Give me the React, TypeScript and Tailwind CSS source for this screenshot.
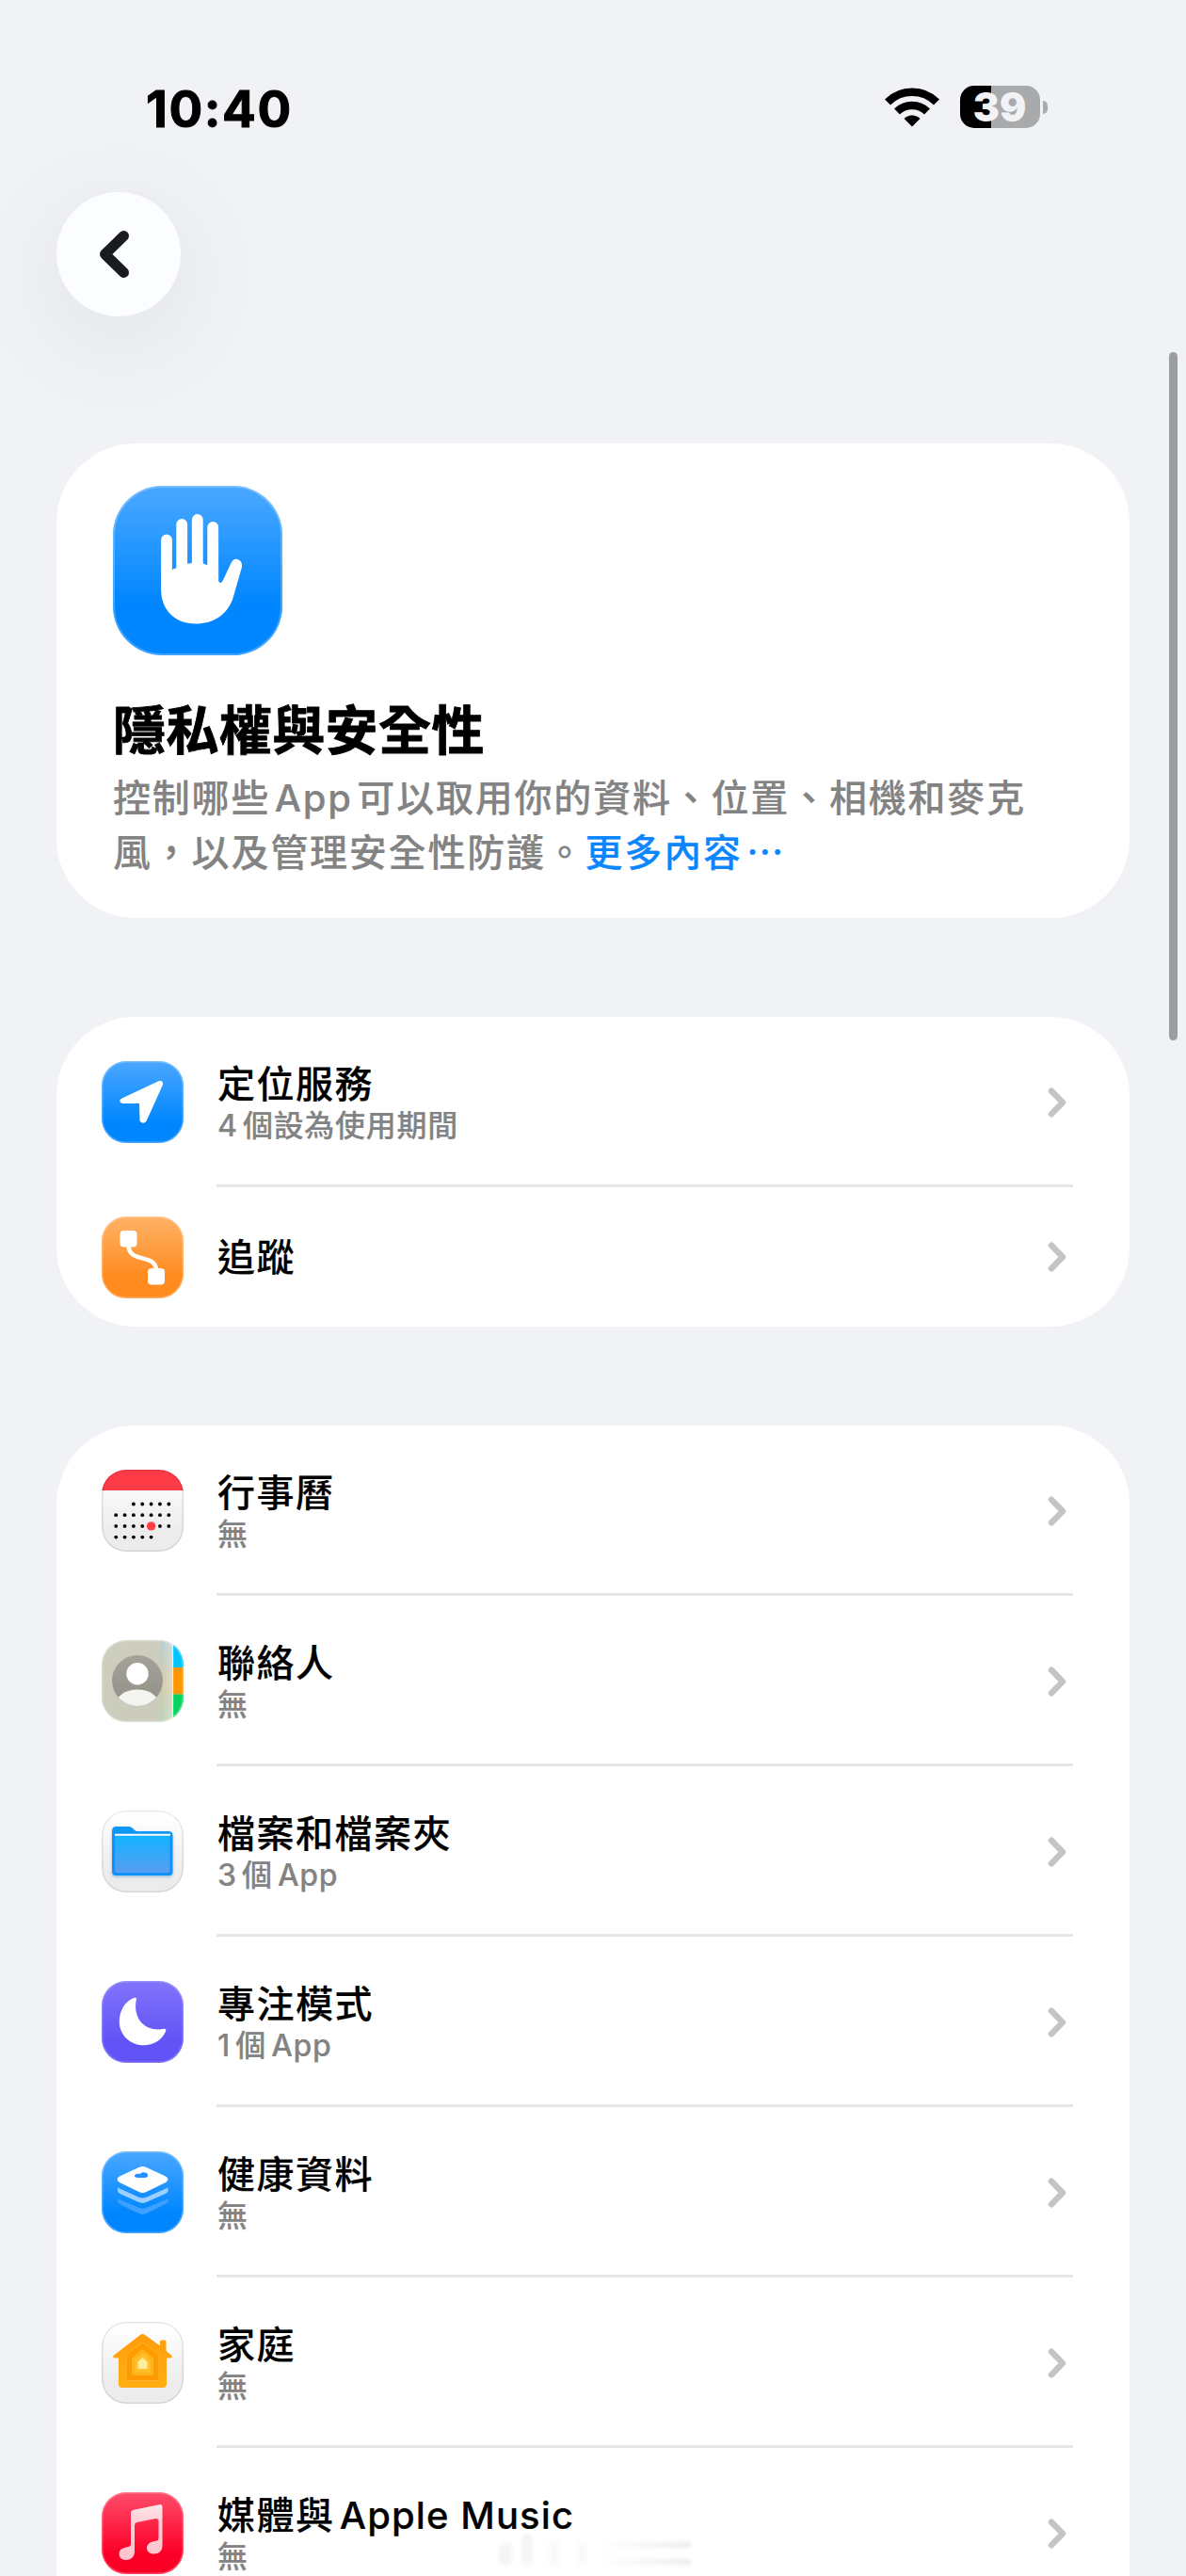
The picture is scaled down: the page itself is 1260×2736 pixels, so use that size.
import React from "react";

const R = 26;

function Squircle({ id, children, stops, rim }: { id: string; children?: React.ReactNode; stops: [string, string]; rim: string }) {
  return (
    <svg width="87" height="87" viewBox="0 0 87 87" className="block">
      <defs>
        <linearGradient id={id + "-bg"} x1="0" y1="0" x2="0" y2="1">
          <stop offset="0.05" stopColor={stops[0]} />
          <stop offset="0.75" stopColor={stops[1]} />
        </linearGradient>
        <clipPath id={id + "-clip"}>
          <rect width="87" height="87" rx={R} />
        </clipPath>
      </defs>
      <g clipPath={`url(#${id}-clip)`}>
        <rect width="87" height="87" fill={`url(#${id}-bg)`} />
        {children}
        <rect x="0.75" y="0.75" width="85.5" height="85.5" rx={R - 0.75} fill="none" stroke={rim} strokeWidth="1.5" />
      </g>
    </svg>
  );
}

const BLUE: [string, string] = ["#46a5ff", "#0086ff"];
const PAPER: [string, string] = ["#ffffff", "#ececec"];

function LocationIcon() {
  return (
    <Squircle id="loc" stops={BLUE} rim="rgba(255,255,255,0.28)">
      <path d="M21 39.800 60.500 21.300Q65.500 19.800 65 25L47.700 63.500Q44 68 40.500 63.500L40 45 22 45Q17 43 21 39.800Z" fill="#fff" />
    </Squircle>
  );
}

function TrackingIcon() {
  return (
    <Squircle id="trk" stops={["#ffb062", "#ff8a1e"]} rim="rgba(255,255,255,0.28)">
      <rect x="19.500" y="15" width="18" height="17.500" rx="4" fill="#fff" />
      <rect x="49" y="55" width="18" height="17.500" rx="4" fill="#fff" />
      <path d="M28.500 31C29 39 33 41.500 41 43.800S57 47 58 56" fill="none" stroke="#fff" strokeWidth="4.500" />
    </Squircle>
  );
}

function CalendarIcon() {
  const rows: number[][] = [[2, 3, 4, 5, 6], [0, 1, 2, 3, 4, 5, 6], [0, 1, 2, 3, 5, 6], [0, 1, 2, 3, 4]];
  return (
    <Squircle id="cal" stops={PAPER} rim="rgba(0,0,0,0.1)">
      <rect width="87" height="22" fill="#ff3b47" />
      {rows.map((cols, r) =>
        cols.map((c) => <circle key={`${r}-${c}`} cx={15.2 + c * 9.35} cy={36.5 + r * 11.7} r="1.900" fill="#000" />)
      )}
      <circle cx="52.600" cy="59.900" r="4.700" fill="#ff4049" />
    </Squircle>
  );
}

function ContactsIcon() {
  return (
    <Squircle id="con" stops={["#cdcebe", "#cbccbc"]} rim="rgba(255,255,255,0.3)">
      <defs>
        <linearGradient id="con-glow" x1="0" x2="1">
          <stop offset="0" stopColor="#fff" stopOpacity="0" />
          <stop offset="1" stopColor="#fff" stopOpacity="0.35" />
        </linearGradient>
        <linearGradient id="con-tint" x1="0" y1="0" x2="0" y2="1">
          <stop offset="0.1" stopColor="#7cc4de" />
          <stop offset="0.5" stopColor="#e8b06a" />
          <stop offset="0.9" stopColor="#90d49a" />
        </linearGradient>
        <linearGradient id="con-head" x1="0" y1="0" x2="0" y2="1">
          <stop offset="0" stopColor="#a4a299" />
          <stop offset="1" stopColor="#918f86" />
        </linearGradient>
        <clipPath id="con-disc">
          <circle cx="38" cy="43" r="27" />
        </clipPath>
      </defs>
      <rect x="62" width="14" height="87" fill="url(#con-tint)" opacity="0.28" />
      <rect x="60" width="16" height="87" fill="url(#con-glow)" />
      <circle cx="38" cy="43" r="27" fill="url(#con-head)" />
      <g clipPath="url(#con-disc)">
        <circle cx="38" cy="35.700" r="11.700" fill="#fff" />
        <ellipse cx="38" cy="70" rx="24" ry="17.500" fill="#f4f4f0" />
      </g>
      <rect x="76" width="11" height="29" fill="#00c5ff" />
      <rect x="76" y="29" width="11" height="28.500" fill="#ff9500" />
      <rect x="76" y="57.500" width="11" height="30" fill="#04d45f" />
      <rect x="75" width="1.200" height="87" fill="#fff" opacity="0.6" />
    </Squircle>
  );
}

function FilesIcon() {
  return (
    <Squircle id="fil" stops={PAPER} rim="rgba(0,0,0,0.09)">
      <defs>
        <linearGradient id="fil-front" x1="0" y1="0" x2="0" y2="1">
          <stop offset="0" stopColor="#10b4ff" />
          <stop offset="1" stopColor="#5a9df2" />
        </linearGradient>
        <filter id="fil-soft" x="-20%" y="-20%" width="140%" height="150%">
          <feDropShadow dx="0" dy="1.500" stdDeviation="1.500" floodColor="#2d6fd0" floodOpacity="0.4" />
        </filter>
      </defs>
      <path d="M11 22Q11 17 15.500 17H29Q31 17 32.500 18.500L34.500 20.500Q36 22 38 22H71Q75.500 22 75.500 26.500V65Q75.500 69 71.500 69H15Q11 69 11 65Z" fill="#0a98f5" filter="url(#fil-soft)" />
      <path d="M13 25.500H73.500V64Q73.500 67 70.500 67H16Q13 67 13 64Z" fill="url(#fil-front)" stroke="#118ffb" strokeWidth="2" />
      <path d="M14 25.700H73" stroke="#fff" strokeWidth="2" />
    </Squircle>
  );
}

function FocusIcon() {
  return (
    <Squircle id="foc" stops={["#8072fb", "#6153f5"]} rim="rgba(255,255,255,0.2)">
      <path d="M33.500 18.200Q36.500 16.800 37 19C35 27 36 37 42 44C48 50.500 56 52.500 66.500 50.800Q69 51 68 53.500C64.500 62.500 55 68.300 44.500 68.300C30 68.300 18.800 57 18.800 43.500C18.800 32 24 22.500 33.500 18.200Z" fill="#fff" />
    </Squircle>
  );
}

function HealthIcon() {
  return (
    <Squircle id="hea" stops={BLUE} rim="rgba(255,255,255,0.28)">
      <path d="M17 50.500V53Q17 55 20 56.300L39 65.800Q43.500 68 48 65.800L67 56.300Q70.500 55 70.500 53V50.500L48 59.500Q43.500 61.500 39 59.500Z" fill="#3d9fff" />
      <path d="M17 38.500V42Q17 44 20 45.300L39 53.800Q43.500 56 48 53.800L67 45.300Q70.500 44 70.500 42V38.500L48 48.500Q43.500 50.500 39 48.500Z" fill="#9bd0ff" />
      <path d="M39.500 17Q43.500 15 47.500 17L68 26.500Q73 29.500 68 33L47.500 43Q43.500 45 39.500 43L19 33Q14 29.500 19 26.500Z" fill="#fff" />
      <path d="M35 25.500C36 23.500 39 23.500 41 24C42 21.500 48 21.500 49 24.500C50 27.500 47 28 43 28C38.500 28.200 34 28 35 25.500Z" fill="#2491ff" />
    </Squircle>
  );
}

function HomeIcon() {
  return (
    <Squircle id="hom" stops={PAPER} rim="rgba(0,0,0,0.1)">
      <defs>
        <linearGradient id="hom-out" x1="0" y1="0" x2="0" y2="1">
          <stop offset="0" stopColor="#ff9d0b" />
          <stop offset="1" stopColor="#ffae12" />
        </linearGradient>
      </defs>
      <path d="M41 14Q43.500 12 46 14L62 25.500V21Q62 19.500 63.500 19.500H67Q68.500 19.500 68.500 21V31L74 35.500Q76 38 73 38.500H69V66Q69 70 65 70H22Q18 70 18 66V38.500H14Q11 38 13 35.500Z" fill="url(#hom-out)" />
      <path d="M43.500 22 26 35V61Q26 62.500 27.500 62.500H59.500Q61 62.500 61 61V35Z" fill="#ff9a00" stroke="#ffb52e" strokeWidth="1" />
      <path d="M43.500 29 32 38.500V55Q32 57 34 57H53Q55 57 55 55V38.500Z" fill="#ffb31a" />
      <path d="M43.500 33.500 35 40.500V52Q35 53.500 36.500 53.500H50.500Q52 53.500 52 52V40.500Z" fill="#ffc02c" />
      <path d="M43.500 38 38.500 42.500V49Q38.500 50 39.500 50H47.500Q48.500 50 48.500 49V42.500Z" fill="#ffee9c" />
    </Squircle>
  );
}

function MusicIcon() {
  return (
    <Squircle id="mus" stops={["#ff4766", "#fb0027"]} rim="rgba(255,255,255,0.28)">
      <defs>
        <linearGradient id="mus-note" x1="0" y1="0" x2="0" y2="1">
          <stop offset="0" stopColor="#ffe6ea" />
          <stop offset="0.3" stopColor="#ffd0d8" />
          <stop offset="1" stopColor="#ffc3cc" />
        </linearGradient>
      </defs>
      <path d="M31 22.500Q31 19.500 34 18.800L61 13.200Q64.500 12.500 64.500 16V57C64.500 62 61 65.500 55.500 65.500C51 65.500 48 63 48 59.500C48 55.500 51 53 55 52.200L58.500 51.500Q60.500 51 60.500 48.500V30.500Q60.500 27.500 57.500 28L37.500 32Q35 32.500 35 35V63C35 68.500 31.500 72 26 72C21.500 72 18.500 69.500 18.500 65.500C18.500 62 21 59.500 25 58.700L29 57.800Q31 57.300 31 55Z" fill="url(#mus-note)" />
    </Squircle>
  );
}

function HeroIcon() {
  return (
    <svg width="180" height="180" viewBox="0 0 180 180" className="block">
      <defs>
        <linearGradient id="hero-bg" x1="0" y1="0" x2="0" y2="1">
          <stop offset="0.050" stopColor="#46a6ff" />
          <stop offset="0.700" stopColor="#0086ff" />
        </linearGradient>
      </defs>
      <rect width="180" height="180" rx="52" fill="url(#hero-bg)" />
      <rect x="1" y="1" width="178" height="178" rx="51" fill="none" stroke="#fff" strokeOpacity="0.25" strokeWidth="2" />
      <g stroke="#fff" strokeWidth="11.800" strokeLinecap="round">
        <path d="M57 57.500V105M73.200 41V100M89.800 36V100M106.200 44V105" />
      </g>
      <path d="M51.100 90H62.500L64 88.500Q88 77 100.500 84.500L112.100 86V101Q114.500 106 117.500 99L125.500 82Q128.500 76 133.500 78.500Q138 81 136.800 87L127 121C120 138 106 146.500 88 146.500C66 146.500 51.100 132 51.100 110Z" fill="#fff" />
    </svg>
  );
}

function Chevron() {
  return (
    <svg width="20" height="34" viewBox="0 0 20 34" className="block">
      <path d="M4 4.800 16 17 4 29.200" fill="none" stroke="#c4c4c6" strokeWidth="6.500" strokeLinecap="round" strokeLinejoin="round" />
    </svg>
  );
}

interface Item {
  id: string;
  title: React.ReactNode;
  sub?: string;
  icon: React.ReactNode;
}

const SYSTEM: Item[] = [
  { id: "location", title: "定位服務", sub: "4 個設為使用期間", icon: <LocationIcon /> },
  { id: "tracking", title: "追蹤", icon: <TrackingIcon /> },
];

const DATA: Item[] = [
  { id: "calendar", title: "行事曆", sub: "無", icon: <CalendarIcon /> },
  { id: "contacts", title: "聯絡人", sub: "無", icon: <ContactsIcon /> },
  { id: "files", title: "檔案和檔案夾", sub: "3 個 App", icon: <FilesIcon /> },
  { id: "focus", title: "專注模式", sub: "1 個 App", icon: <FocusIcon /> },
  { id: "health", title: "健康資料", sub: "無", icon: <HealthIcon /> },
  { id: "home", title: "家庭", sub: "無", icon: <HomeIcon /> },
  {
    id: "music",
    title: (
      <>
        媒體與 <span className="tracking-[1.1px] [word-spacing:0px]">Apple Music</span>
      </>
    ),
    sub: "無",
    icon: <MusicIcon />,
  },
];

function Row({ item, last }: { item: Item; last: boolean }) {
  return (
    <div className={item.sub ? "flex h-[181px] pl-12" : "flex h-[148px] pl-12"}>
      <div className="flex w-[122px] shrink-0 items-center">{item.icon}</div>
      <div
        className={
          last
            ? "mr-[60px] flex flex-1 items-center justify-between pr-[7px]"
            : "mr-[60px] flex flex-1 items-center justify-between pr-[7px] shadow-[inset_0_-3px_0_#e6e6e6]"
        }
      >
        <div className={item.sub ? "pl-px whitespace-nowrap" : "pt-[2px] pl-px whitespace-nowrap"}>
          <div className="text-[40px] leading-[50px] font-medium tracking-[1.5px] text-black [-webkit-text-stroke:0.2px_#000] [word-spacing:-7px]">{item.title}</div>
          {item.sub && (
            <div className="text-[32px] leading-[38px] font-medium tracking-[0.7px] text-[#838383] [-webkit-text-stroke:0.2px_#838383] [word-spacing:-4px]">
              {item.sub}
            </div>
          )}
        </div>
        <Chevron />
      </div>
    </div>
  );
}

function Card({ items, clipped }: { items: Item[]; clipped?: boolean }) {
  return (
    <section className={clipped ? "rounded-t-[84px] bg-white" : "rounded-[84px] bg-white"}>
      {items.map((item, i) => (
        <Row key={item.id} item={item} last={i === items.length - 1} />
      ))}
    </section>
  );
}

function StatusBar() {
  return (
    <div className="flex h-[204px] items-start justify-between pt-[84px] pr-[147px] pl-[155px]">
      <div className="text-[53px] leading-[64px] font-bold tracking-[1.6px] text-black [-webkit-text-stroke:1px_#000]">10:40</div>
      <div className="flex items-center pt-[7px]">
        <svg width="58" height="43" viewBox="0 0 58 43" className="mr-[22px] block">
          <g fill="none" stroke="#000" strokeWidth="8.500">
            <path d="M3 16.500A37 37 0 0 1 55 16.500" />
            <path d="M13 26.500A23 23 0 0 1 45 26.500" />
          </g>
          <path d="M20.500 34A12 12 0 0 1 37.500 34L29 42.500Z" />
        </svg>
        <div className="flex h-[45px] w-[85px] items-center justify-center rounded-[15px] bg-[linear-gradient(90deg,#000_39%,#a9aaac_39%)] pr-[1px] text-[42px] leading-[45px] font-black text-[#f2f3f7]">
          39
        </div>
        <div className="ml-[3px] h-[14px] w-[5px] rounded-r-full bg-[#a9aaac]" />
      </div>
    </div>
  );
}

/** Barely visible translucent smudge floating over the bottom of the list. */
function Smudge() {
  return (
    <div className="absolute top-[2690px] left-[530px] flex h-[34px] items-end gap-3 opacity-55 blur-[2px]">
      <div className="h-[22px] w-[14px] bg-[#ececec]" />
      <div className="h-[32px] w-[8px] rounded-t-full border-2 border-b-0 border-[#d0d0d0]" />
      <div className="ml-2 h-[26px] w-[10px] bg-[#f3f3f3]" />
      <div className="ml-2 h-[24px] w-[8px] bg-[#f3f3f3]" />
      <div className="flex h-[24px] w-[100px] flex-col justify-between">
        <div className="h-[6px] bg-linear-to-r from-white to-[#dcdcdc]" />
        <div className="h-[6px] bg-linear-to-r from-white to-[#dcdcdc]" />
      </div>
    </div>
  );
}

export default function App() {
  return (
    <div lang="zh-Hant" className="relative h-[2736px] w-[1260px] overflow-hidden bg-[#f1f2f6] font-[Inter,'Noto_Sans_CJK_TC',sans-serif]">
      <StatusBar />
      <button className="ml-[60px] flex size-[132px] items-center justify-center rounded-full bg-[#fcfdfe] shadow-[0_24px_110px_rgba(0,0,0,0.08)]">
        <svg width="44" height="60" viewBox="0 0 44 60" className="mr-[10px] block">
          <path d="M32.500 10.500 12.500 30 32.500 49.500" fill="none" stroke="#1a1b1e" strokeWidth="11" strokeLinecap="round" strokeLinejoin="round" />
        </svg>
      </button>

      <main className="mt-[135px] flex flex-col gap-[105px] px-[60px]">
        <section className="h-[504px] rounded-[84px] bg-white px-[60px] pt-[45px]">
          <HeroIcon />
          <h1 className="mt-[46px] text-[56px] leading-[68px] font-bold tracking-[0.4px] text-black [-webkit-text-stroke:0.8px_#000]">隱私權與安全性</h1>
          <p className="mt-[9px] text-[40px] leading-[57.500px] font-medium tracking-[1.800px] whitespace-nowrap text-[#838383] [-webkit-text-stroke:0.2px_#838383] [word-spacing:-8px]">
            控制哪些 App 可以取用你的資料、位置、相機和麥克
            <br />
            風，以及管理安全性防護。
            <a className="text-[#0b86ff] [-webkit-text-stroke:0.2px_#0b86ff]">
              更多內容<span className="ml-[4px]">⋯</span>
            </a>
          </p>
        </section>
        <Card items={SYSTEM} />
        <Card items={DATA} clipped />
      </main>

      <Smudge />
      <div className="absolute top-[374px] right-[9px] h-[731px] w-[9px] rounded-full bg-[#9c9da0]" />
    </div>
  );
}
